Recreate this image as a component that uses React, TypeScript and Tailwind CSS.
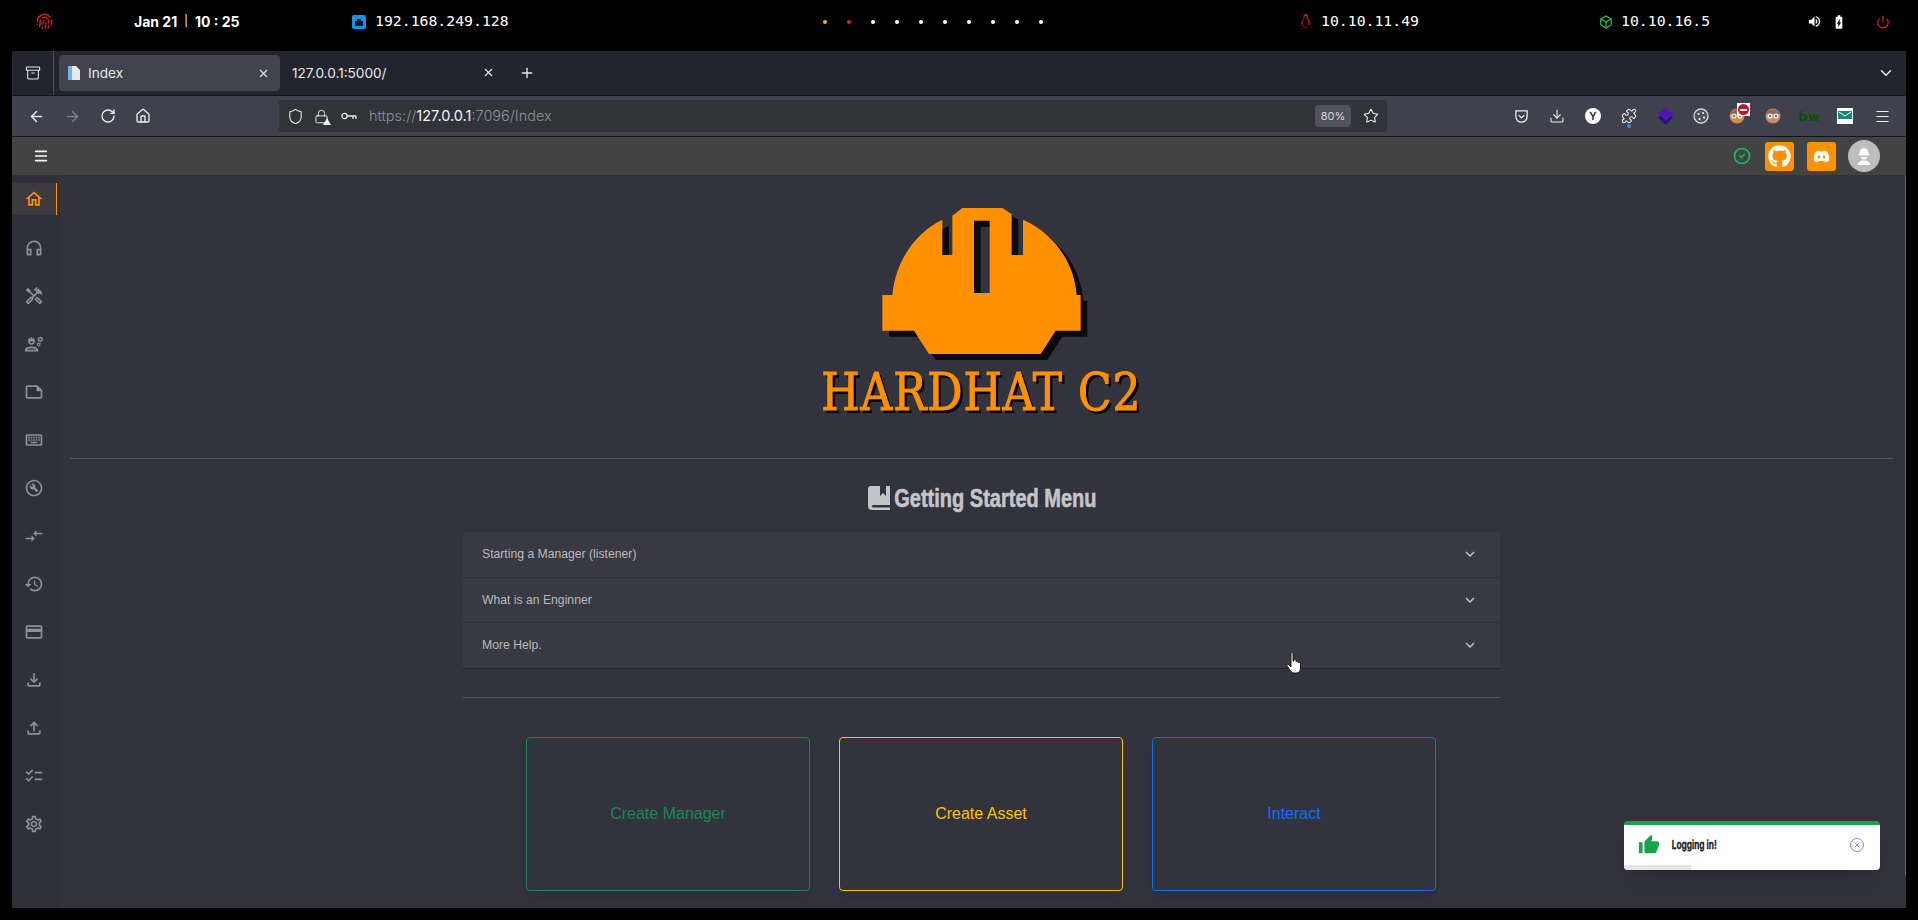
import {
  MdOutlineHome,
  MdOutlineHeadphones,
  MdOutlineHandyman,
  MdOutlineEngineering,
  MdOutlineNote,
  MdOutlineKeyboard,
  MdOutlineBuildCircle,
  MdCompareArrows,
  MdHistory,
  MdOutlineCreditCard,
  MdOutlineFileDownload,
  MdOutlineFileUpload,
  MdChecklist,
  MdOutlineSettings,
  MdThumbUp,
  MdVolumeUp,
  MdBatteryChargingFull,
  MdExpandMore,
} from "react-icons/md";
import { FaGithub, FaDiscord, FaLinux } from "react-icons/fa";
import {
  ArrowLeft,
  ArrowRight,
  RotateCw,
  Home,
  Shield,
  Star,
  Download,
  Puzzle,
  Menu,
  Plus,
  X,
  ChevronDown,
  Fingerprint,
  Box,
  Power,
  CircleCheck,
  Archive,
  Lock,
} from "lucide-react";

const sideIcons = [
  MdOutlineHeadphones,
  MdOutlineHandyman,
  MdOutlineEngineering,
  MdOutlineNote,
  MdOutlineKeyboard,
  MdOutlineBuildCircle,
  MdCompareArrows,
  MdHistory,
  MdOutlineCreditCard,
  MdOutlineFileDownload,
  MdOutlineFileUpload,
  MdChecklist,
  MdOutlineSettings,
];

const helmet =
  "M305 318 L335 318 C345 215 405 130 485 92 L485 198 L515 198 L515 80 L545 57 L665 57 L693 75 L693 198 L727 198 L727 92 C815 130 880 215 888 318 L900 318 L900 425 L825 425 L780 495 L445 495 L400 425 L305 425 Z M580 95 L580 312 L627 312 L627 95 Z";

function Foxy({ tint }: { tint: string }) {
  return (
    <svg width="18" height="18" viewBox="0 0 18 18">
      <circle cx="9" cy="9" r="7.5" fill={tint} />
      <path d="M2 7 C4 1 14 1 16 7 Z" fill="#8a6a4f" />
      <circle cx="6" cy="9" r="2.6" fill="#dfe7ea" />
      <circle cx="12" cy="9" r="2.6" fill="#dfe7ea" />
      <circle cx="6" cy="9" r="1" fill="#2d5f73" />
      <circle cx="12" cy="9" r="1" fill="#2d5f73" />
    </svg>
  );
}

function TopBar() {
  return (
    <div className="flex h-[51px] items-center bg-black pb-[8px] text-white font-['DejaVu_Sans_Mono',monospace] text-[14.8px]">
      <div className="w-[134px] pl-[36px]">
        <Fingerprint size={17} className="text-[#c81e1e]" />
      </div>
      <div className="flex w-[218px] items-center font-['Inter',sans-serif] text-[14px] font-bold">
        <span>Jan 21</span>
        <span className="mx-[7px] text-[11px] font-normal">|</span>
        <span>10 : 25</span>
      </div>
      <div className="flex w-[471px] items-center gap-[9px]">
        <svg width="14" height="14" viewBox="0 0 14 14">
          <rect width="14" height="14" rx="2" fill="#1d8fe0" />
          <path d="M3 11 V6 H5 V4 H9 V6 H11 V11 Z" fill="#0b1a2a" />
        </svg>
        <span>192.168.249.128</span>
      </div>
      <div className="flex w-[475px] items-center gap-[20px]">
        <div className="h-1 w-1 rounded-full bg-[#f5b400]" />
        <div className="h-1 w-1 rounded-full bg-[#e02020]" />
        {[0, 1, 2, 3, 4, 5, 6, 7].map((i) => (
          <div key={i} className="h-1 w-1 rounded-full bg-white" />
        ))}
      </div>
      <div className="flex w-[301px] items-center gap-[8px]">
        <FaLinux size={15} className="text-[#b91c1c]" />
        <span>10.10.11.49</span>
      </div>
      <div className="flex w-[208px] items-center gap-[8px]">
        <Box size={14} className="text-[#22c55e]" />
        <span>10.10.16.5</span>
      </div>
      <div className="flex items-center">
        <MdVolumeUp size={15} className="mr-[9px]" />
        <MdBatteryChargingFull size={16} className="mr-[29px]" />
        <Power size={14} className="text-[#dc2626]" />
      </div>
    </div>
  );
}

function TabBar() {
  return (
    <div className="flex h-[45px] items-center border-b border-[#14151a] bg-[#22252e] text-[#e8e8ea]">
      <div className="flex h-full w-[42px] items-center justify-center border-r border-[#4a4d57]">
        <Archive size={16} strokeWidth={1.6} />
      </div>
      <div className="ml-[5px] flex h-[36px] w-[221px] items-center rounded bg-[#41444d] pl-[7px] pr-[10px] text-[13.6px]">
        <svg width="16" height="16" viewBox="0 0 16 16">
          <path d="M2 1 H10 L14 5 V15 H2 Z" fill="#e6e9ee" />
          <rect x="2" y="1" width="4" height="14" fill="#6fb2e6" />
        </svg>
        <span className="ml-[6px] flex-1 pt-[1px]">Index</span>
        <X size={13} />
      </div>
      <div className="flex w-[221px] items-center pl-[12px] pr-[6px] text-[13.6px]">
        <span className="flex-1 pt-[1px]">127.0.0.1:5000/</span>
        <X size={13} />
      </div>
      <Plus size={16} className="ml-[18px]" />
      <div className="flex-1" />
      <ChevronDown size={18} className="mr-[11px]" />
    </div>
  );
}

function NavBar() {
  return (
    <div className="flex h-[41px] items-center border-b border-[#14151a] bg-[#3f424c] text-[#eceded]">
      <ArrowLeft size={17} className="ml-[16px]" />
      <ArrowRight size={17} className="ml-[19px] text-[#7d7f87]" />
      <RotateCw size={16} className="ml-[19px]" />
      <Home size={16} className="ml-[19px]" />
      <div className="ml-[128px] flex h-[32px] w-[1108px] items-center rounded bg-[#31333a] pl-[8px] pr-[7px]">
        <Shield size={17} strokeWidth={1.5} />
        <div className="relative ml-[10px]">
          <Lock size={15} strokeWidth={1.5} />
          <div className="absolute -bottom-[1px] -right-[2px] h-0 w-0 border-x-[4px] border-b-[7px] border-x-transparent border-b-[#eceded]" />
        </div>
        <svg className="ml-[12px]" width="16" height="10" viewBox="0 0 16 10" fill="none" stroke="#eceded" strokeWidth="1.3">
          <circle cx="3.5" cy="5" r="2.6" />
          <path d="M6 5 H15 M12 5 V8 M15 5 V8" />
        </svg>
        <div className="ml-[12px] flex-1 font-['Inter',sans-serif] text-[14.5px] font-light text-[#8f9197]">
          https://<span className="font-normal text-[#f3f3f4]">127.0.0.1</span>:7096/Index
        </div>
        <div className="flex h-[22px] w-[36px] items-center justify-center rounded bg-[#50535b] text-[11px] text-[#d8d8da]">
          80%
        </div>
        <Star size={16} strokeWidth={1.6} className="ml-[12px] mr-[1px]" />
      </div>
      <div className="ml-[117px] flex items-center">
        <div className="flex w-[35px] justify-center">
          <svg width="15" height="15" viewBox="0 0 16 16" fill="none" stroke="#eceded" strokeWidth="1.4">
            <path d="M2 2 H14 V8 C14 16 2 16 2 8 Z" />
            <path d="M5 6.5 L8 9.5 L11 6.5" />
          </svg>
        </div>
        <div className="flex w-[36px] justify-center">
          <Download size={16} strokeWidth={1.6} />
        </div>
        <div className="flex w-[36px] justify-center">
          <div className="flex h-4 w-4 items-center justify-center rounded-full bg-white text-[10px] font-bold text-[#333]">
            Y
          </div>
        </div>
        <div className="relative flex w-[36px] justify-center">
          <Puzzle size={16} strokeWidth={1.6} />
          <div className="absolute -bottom-[4px] left-[16px] h-1 w-1 rounded-full bg-[#3b82f6]" />
        </div>
        <div className="flex w-[36px] justify-center">
          <svg width="17" height="18" viewBox="0 0 17 18">
            <path d="M8.5 4 L16 10.5 L8.5 18 L1 10.5 Z" fill="#2a1470" />
            <path d="M8.5 0 L16 7 L8.5 14 L1 7 Z" fill="#4a18b8" />
          </svg>
        </div>
        <div className="flex w-[36px] justify-center">
          <svg width="16" height="16" viewBox="0 0 16 16">
            <circle cx="8" cy="8" r="7" fill="#50535b" stroke="#d8d8da" strokeWidth="1.3" />
            <circle cx="5.5" cy="6" r="1.1" fill="#eceded" />
            <circle cx="10" cy="5" r="1" fill="#eceded" />
            <circle cx="11" cy="9.5" r="1.1" fill="#eceded" />
            <circle cx="6.5" cy="11" r="1.1" fill="#eceded" />
          </svg>
        </div>
        <div className="relative flex w-[36px] justify-center">
          <Foxy tint="#d98a3a" />
          <div className="absolute -top-[4px] right-[5px] flex h-[13px] w-[13px] items-center justify-center bg-white">
            <div className="flex h-[11px] w-[11px] items-center justify-center rounded-full bg-[#c8102e]">
              <div className="h-[2px] w-[7px] bg-white" />
            </div>
          </div>
        </div>
        <div className="flex w-[36px] justify-center">
          <Foxy tint="#c98a64" />
        </div>
        <div className="flex w-[36px] justify-center font-['DejaVu_Sans',sans-serif] text-[13px] font-bold leading-none text-[#0f4d0f]">
          bw
        </div>
        <div className="flex w-[36px] justify-center">
          <div className="flex h-4 w-4 items-center justify-center bg-white">
            <svg width="14" height="11" viewBox="0 0 14 11">
              <rect width="14" height="8" fill="#14867a" />
              <path d="M1 1 L7 5 L13 1" fill="none" stroke="#fff" />
            </svg>
          </div>
        </div>
        <div className="flex w-[38px] justify-center">
          <Menu size={17} strokeWidth={1.6} />
        </div>
      </div>
    </div>
  );
}

function Sidebar() {
  return (
    <div className="w-[48px] shrink-0 bg-[#2f303a] pt-[8px] text-[#8f9096]">
      <div className="flex h-[32px] w-[45px] items-center justify-center border-r border-[#ff9100] bg-[#3d3a3e] text-[#ff9100]">
        <MdOutlineHome size={20} />
      </div>
      <div className="mt-[21px] flex flex-col gap-[24px] pl-[12px]">
        {sideIcons.map((Icon, i) => (
          <Icon key={i} size={20} className="h-[24px]" />
        ))}
      </div>
    </div>
  );
}

function Logo() {
  return (
    <div className="flex h-[283px] flex-col items-center pt-[33px]">
      <svg width="214" height="155" viewBox="283 57 642 465">
        <path d={helmet} fill="#0a0a0a" transform="translate(20 18)" />
        <path d={helmet} fill="#ff9100" fillRule="evenodd" />
      </svg>
      <div className="mt-[6px] flex h-[46px] w-[317px] justify-center">
        <span className="shrink-0 scale-x-[0.94] whitespace-nowrap font-['DejaVu_Serif_Condensed','DejaVu_Serif',serif] text-[52px] font-normal leading-[46px] tracking-[1px] text-[#ff9100] [-webkit-text-stroke:1px_#ff9100] [text-shadow:3px_3px_0_#000]">
          HARDHAT C2
        </span>
      </div>
    </div>
  );
}

function AccordionRow({ label, last }: { label: string; last?: boolean }) {
  return (
    <div
      className={`flex h-[45.5px] items-center justify-between pl-[19px] pr-[21px] ${
        last ? "border-b border-[#24252c]" : "border-b border-[#2e2f37]"
      }`}
    >
      <span className="text-[12.2px] text-[#b9babd]">{label}</span>
      <MdExpandMore size={18} className="text-[#c2c3c7]" />
    </div>
  );
}

function Card({ label, color }: { label: string; color: string }) {
  return (
    <div className={`flex h-[154px] w-[284px] items-center justify-center rounded border text-[16px] shadow-lg ${color}`}>
      {label}
    </div>
  );
}

function Page() {
  return (
    <div className="relative flex-1 overflow-hidden bg-[#32333d] px-[10px] pr-[13px]">
      <Logo />
      <div className="h-px bg-[#55565e]" />
      <div className="mt-[27px] flex h-[24px] items-center justify-center text-[#c4c5c9]">
        <svg width="22" height="24" viewBox="0 0 22 24" fill="currentColor">
          <path d="M3 0 H12 V10 L15 7 L18 10 V0 H22 V19 H5 C3.5 19 3.5 21.5 5 21.5 H22 V24 H4 C1.5 24 0 22.5 0 20 V3 C0 1 1 0 3 0 Z" />
        </svg>
        <div className="ml-[5px] flex w-[200px] justify-center">
          <span className="shrink-0 scale-x-[0.8] whitespace-nowrap text-[25px] font-bold leading-none [-webkit-text-stroke:0.6px_#c4c5c9]">
            Getting Started Menu
          </span>
        </div>
      </div>
      <div className="mx-auto mt-[22px] w-[1037px]">
        <div className="rounded-t bg-[#383942]">
          <AccordionRow label="Starting a Manager (listener)" />
          <AccordionRow label="What is an Enginner" />
          <AccordionRow label="More Help." last />
        </div>
        <div className="mt-[28px] h-px bg-[#55565e]" />
        <div className="mt-[39px] -ml-[1px] flex justify-center gap-[29px]">
          <Card label="Create Manager" color="border-[#198754] text-[#198754]" />
          <Card label="Create Asset" color="border-[#ffc107] text-[#ffc107]" />
          <Card label="Interact" color="border-[#0d6efd] text-[#0d6efd]" />
        </div>
      </div>
      <div className="absolute right-0 top-0 h-[700px] w-px bg-[#66676e]" />
    </div>
  );
}

function Toast() {
  return (
    <div className="absolute left-[1612px] top-[770px] h-[49px] w-[256px] overflow-hidden rounded border-t-4 border-[#16a34a] bg-white shadow-xl">
      <div className="flex h-[40px] items-center pl-[14px] pr-[16px]">
        <MdThumbUp size={22} className="text-[#16a34a]" />
        <div className="ml-[12px] flex w-[44px] justify-center pt-[2px]">
          <span className="shrink-0 scale-x-[0.72] whitespace-nowrap text-[11.5px] font-bold text-[#222] [-webkit-text-stroke:0.3px_#222]">
            Logging in!
          </span>
        </div>
        <div className="flex-1" />
        <div className="flex h-[14px] w-[14px] items-center justify-center rounded-full border border-[#8296b8] text-[#8296b8]">
          <X size={8} strokeWidth={3} />
        </div>
      </div>
      <div className="h-[5px] w-[67px] bg-[#e5e5e5]" />
    </div>
  );
}

export default function App() {
  return (
    <div className="h-[920px] w-[1918px] overflow-hidden bg-black font-['Liberation_Sans',sans-serif]">
      <TopBar />
      <div className="relative ml-[12px] flex h-[857px] w-[1894px] flex-col font-['Inter',sans-serif]">
        <TabBar />
        <NavBar />
        <div className="flex flex-1 flex-col overflow-hidden font-['Liberation_Sans',sans-serif]">
          <div className="flex h-[38px] shrink-0 items-center bg-[#434343] pl-[21px] pr-[26px] shadow-md">
            <Menu size={16} className="text-white" strokeWidth={2.4} />
            <div className="flex-1" />
            <CircleCheck size={18} strokeWidth={2.2} className="text-[#10c060]" />
            <div className="ml-[14px] flex h-[29px] w-[29px] items-center justify-center rounded-[3px] bg-[#ff9100] text-white">
              <FaGithub size={23} />
            </div>
            <div className="ml-[13px] flex h-[29px] w-[29px] items-center justify-center rounded-[3px] bg-[#ff9100] text-white">
              <FaDiscord size={17} />
            </div>
            <div className="ml-[12px] flex h-[32px] w-[32px] items-center justify-center rounded-full bg-[#bdbdbd]">
              <svg width="14" height="18" viewBox="0 0 14 18" fill="#fff">
                <path d="M2.5 7 C2.5 3 4.5 1 7 1 C9.5 1 11.5 3 11.5 7 L12.5 7 V8.5 H1.5 V7 Z" />
                <path d="M4 10 H10 C10 11.5 8.5 12.5 7 12.5 C5.5 12.5 4 11.5 4 10 Z" />
                <path d="M1 18 C1 15 3.5 13.5 7 13.5 C10.5 13.5 13 15 13 18 Z" />
              </svg>
            </div>
          </div>
          <div className="flex min-h-0 flex-1">
            <Sidebar />
            <Page />
          </div>
        </div>
        <Toast />
      </div>
      <svg className="absolute left-[1286px] top-[652px]" width="18" height="22" viewBox="0 0 18 22">
        <path
          d="M5 1 C6 0 7 1 7 2 V9 L8 9 V7.5 C9 7 10 7.5 10 8.5 V9.5 C11 9 12 9.5 12 10.5 C13 10 14.5 10.5 14.5 12 V16 C14.5 19 13 21 10 21 H8 C6 21 4.5 19 3.5 17.5 L1 13.5 C1 12.5 2 12 3 13 L5 15 Z"
          fill="#fff"
          stroke="#111"
          strokeWidth="0.9"
        />
      </svg>
    </div>
  );
}
